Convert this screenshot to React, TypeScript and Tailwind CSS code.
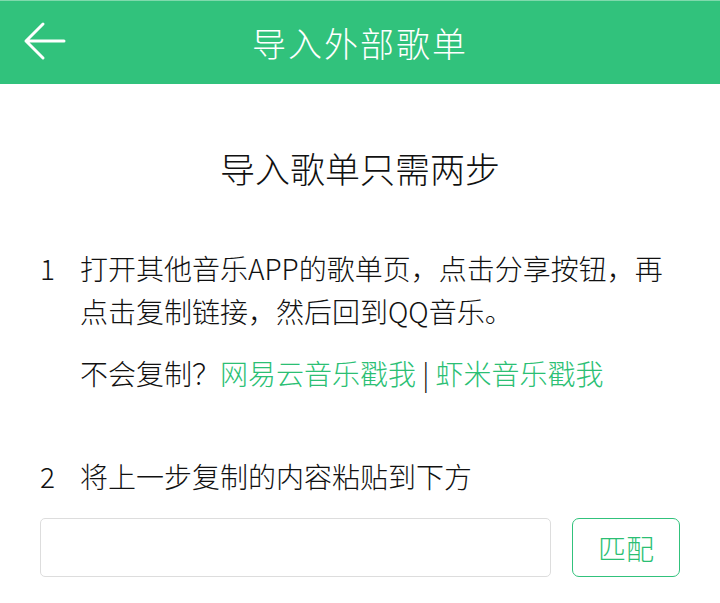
export default function App() {
  const font = { fontFamily: '"Noto Sans CJK SC", Roboto, sans-serif' }
  return (
    <div className="w-[720px] h-[603px] bg-white overflow-hidden font-light" style={font}>
      <div className="relative h-[84px] bg-[#31c27c] border-t border-[#7fd9ac] flex items-center justify-center">
        <svg className="absolute left-[22px] top-[19px]" width="46" height="42" viewBox="0 0 46 42" fill="none">
          <path d="M42 21H4M21 4L4 21L21 38" stroke="#fff" strokeWidth="3" strokeLinecap="round" strokeLinejoin="round" />
        </svg>
        <h1 className="text-white text-[34px] leading-none tracking-[2px]">导入外部歌单</h1>
      </div>

      <div className="pt-[62px] text-center text-[#111] text-[35px] leading-[44px]">导入歌单只需两步</div>

      <div className="mt-[57px] px-[40px] text-[#111] text-[28px]">
        <div className="flex leading-[43px]">
          <span className="w-[40px] shrink-0">1</span>
          <p className="flex-1 pr-[12px]">打开其他音乐APP的歌单页，点击分享按钮，再点击复制链接，然后回到QQ音乐。</p>
        </div>
        <p className="mt-[19px] ml-[40px] leading-[43px]">
          不会复制？<span className="text-[#2bbf74]">网易云音乐戳我</span> | <span className="text-[#2bbf74]">虾米音乐戳我</span>
        </p>
        <div className="flex mt-[60px] leading-[43px]">
          <span className="w-[40px] shrink-0">2</span>
          <p className="flex-1">将上一步复制的内容粘贴到下方</p>
        </div>
        <div className="flex gap-[21px] mt-[20px]">
          <input className="w-[511px] h-[59px] rounded-[5px] border border-[#dddddd] outline-none px-3 text-[24px]" />
          <button className="w-[108px] h-[59px] rounded-[7px] border border-[#31c27c] text-[#2bbf74] text-[28px]">匹配</button>
        </div>
      </div>
    </div>
  )
}
